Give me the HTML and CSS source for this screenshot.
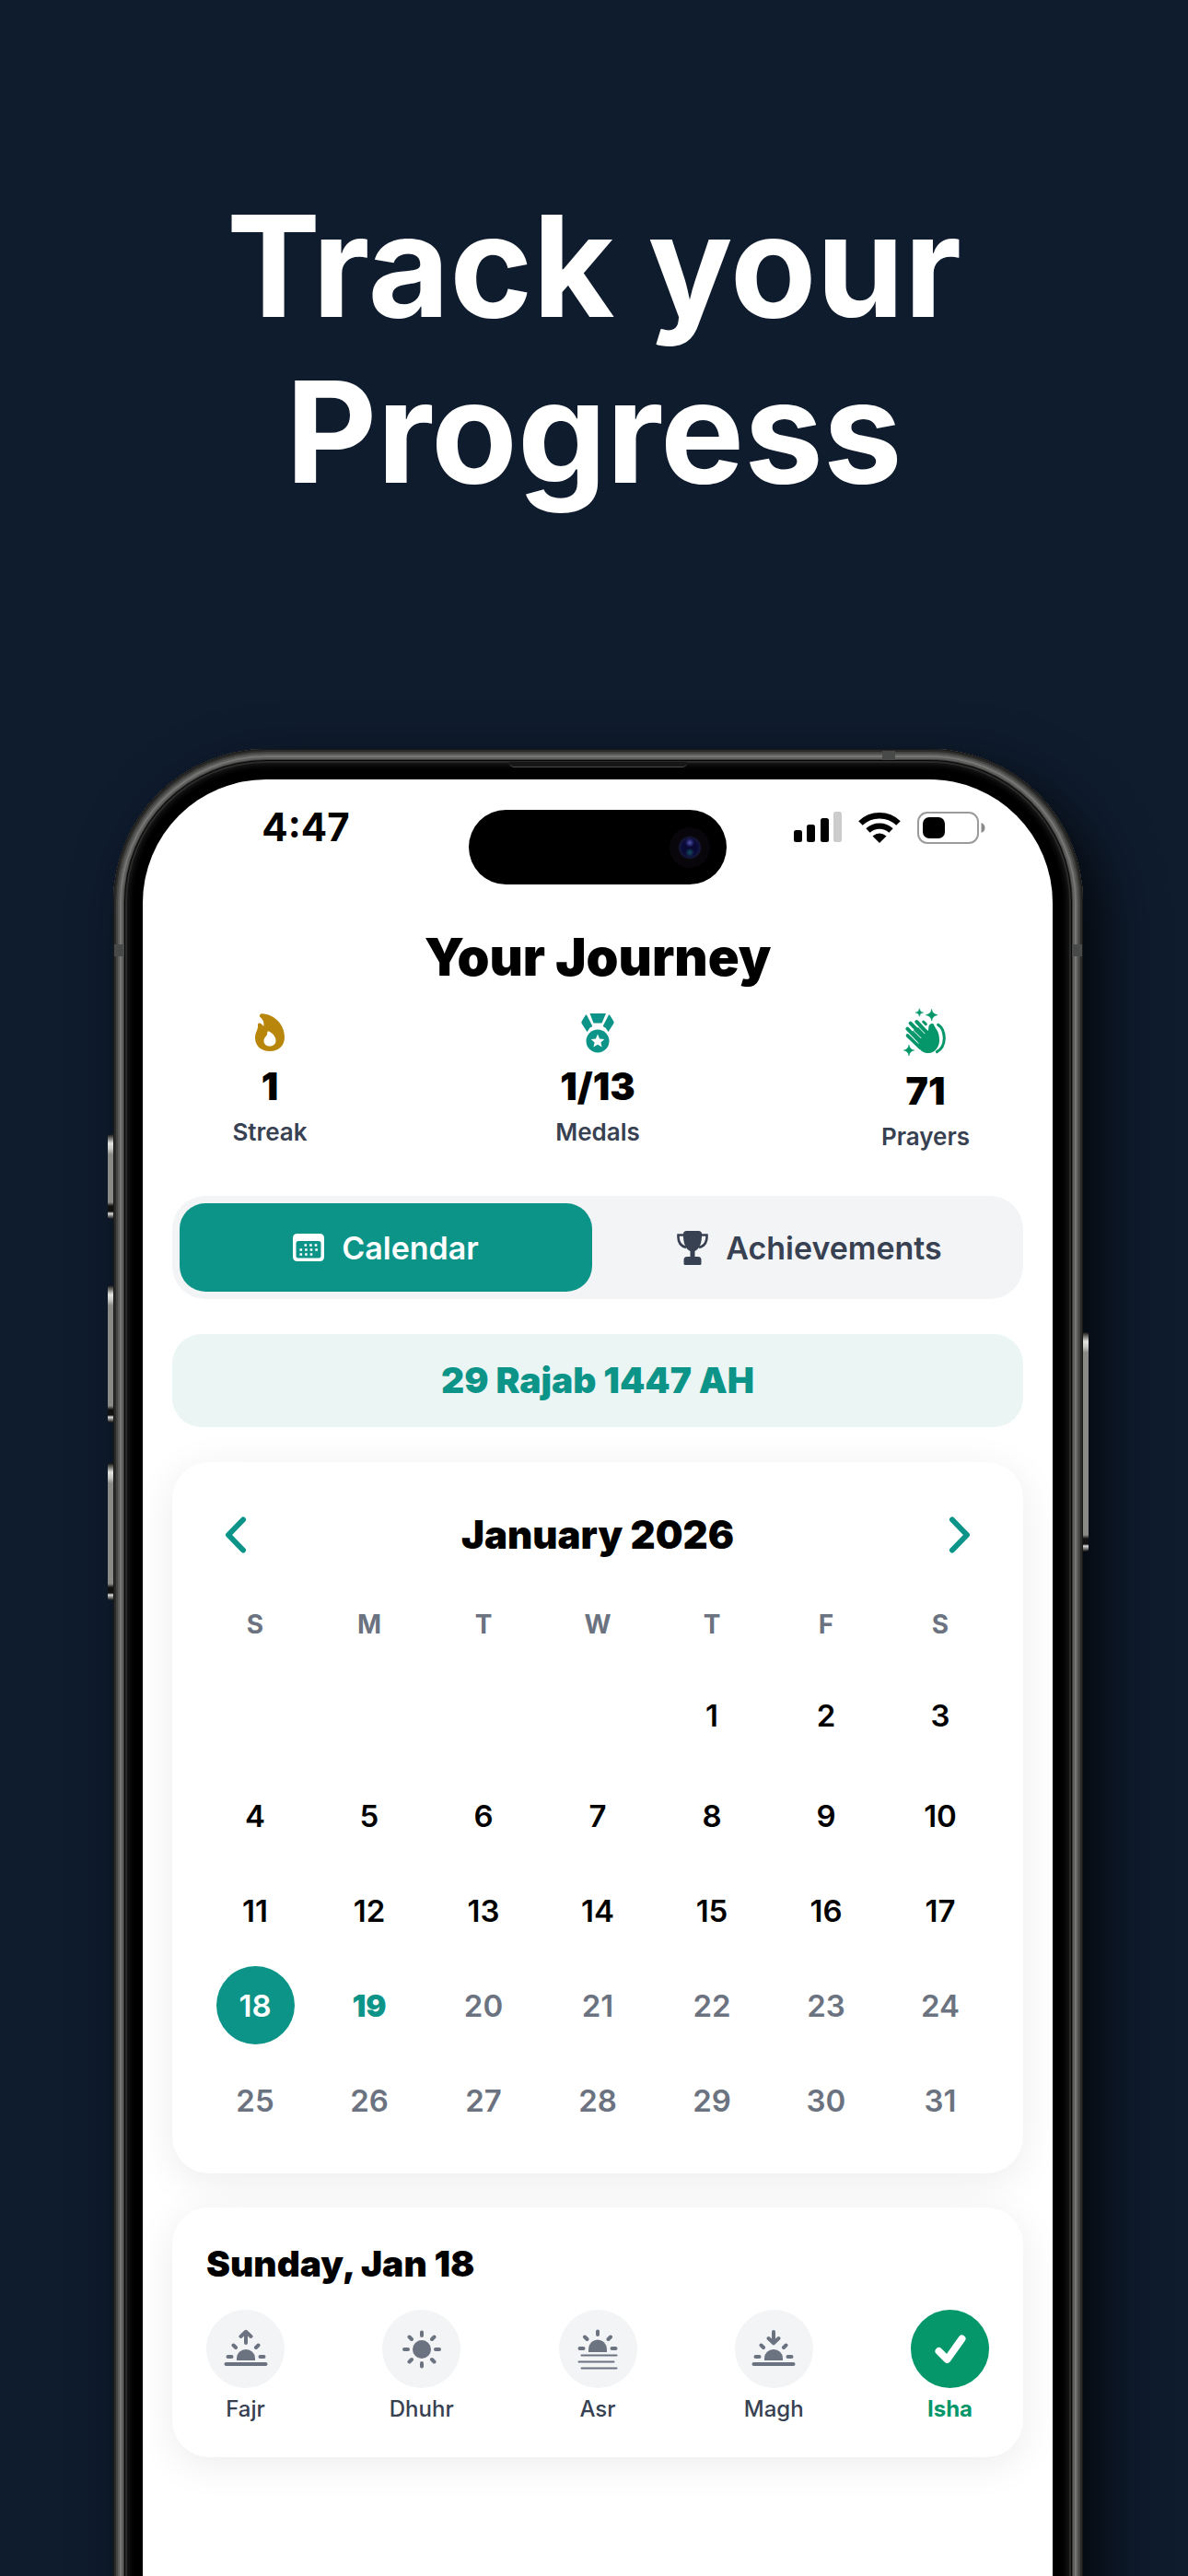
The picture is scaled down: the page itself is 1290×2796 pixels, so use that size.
FILE: index.html
```
<!DOCTYPE html>
<html lang="en">
<head>
    <meta charset="UTF-8">
    <meta name="viewport" content="width=device-width, initial-scale=1.0">
    <title>Track your Progress</title>
    <link rel="stylesheet" href="styles.css">
</head>
<body>
    <main class="stage">
        <h1>Track your<br>Progress</h1>

        <div class="phone">
            <span class="side-button action"></span>
            <span class="side-button volume-up"></span>
            <span class="side-button volume-down"></span>
            <span class="side-button power"></span>
            <span class="speaker"></span>
            <span class="antenna antenna-top"></span>
            <span class="antenna antenna-left"></span>
            <span class="antenna antenna-right"></span>

            <div class="screen">
                <div class="status-bar">
                    <span class="time">4:47</span>
                    <div class="island"><span class="camera"></span></div>
                    <div class="status-icons">
                        <svg width="52" height="34" viewBox="0 0 52 34">
                            <rect x="0" y="20" width="9" height="13" rx="2.5"/>
                            <rect x="14" y="14" width="9" height="19" rx="2.5"/>
                            <rect x="29" y="7" width="9" height="26" rx="2.5"/>
                            <rect x="43" y="0" width="9" height="33" rx="2.5" fill="#ccc"/>
                        </svg>
                        <svg width="46" height="34" viewBox="0 0 46 34">
                            <path d="M2.500 12.500A29.500 29.500 0 0 1 43.500 12.500" fill="none" stroke="#000" stroke-width="6.500"/>
                            <path d="M10.500 20.500A18.200 18.200 0 0 1 35.500 20.500" fill="none" stroke="#000" stroke-width="6.300"/>
                            <path d="M15.500 26.500Q23 20.500 30.500 26.500L23 34Z"/>
                        </svg>
                        <svg width="74" height="35" viewBox="0 0 74 35">
                            <rect x="1" y="1" width="65" height="33" rx="10" fill="none" stroke="#9b9b9b" stroke-width="2"/>
                            <rect x="6" y="6" width="24" height="23" rx="7"/>
                            <path d="M69.500 12Q73.500 13.500 73.500 17.500T69.500 23Z" fill="#8a8a8a"/>
                        </svg>
                    </div>
                </div>

                <div class="content">
                    <h2>Your Journey</h2>

                    <div class="stats">
                        <div class="stat">
                            <svg class="stat-icon" width="32" height="51" viewBox="0 -6 32 51" fill="#b8860b">
                                <path fill-rule="evenodd" d="M8 .3C20 1 32 11 32 26 32 35.500 25 41 16 41 7 41 0 35.500 0 26.500 0 20 3.500 18 3 12.500 2.800 10 5.500 10 7 11.500L9.300 14C10 9.500 8.500 6.500 5.500 4 4 2.500 5.500.2 8 .3ZM15 19.500C14 19 13 20 13.200 21.500 13.500 24.500 9.500 25.500 9.500 30 9.500 33.500 12.500 35.500 16 35.500 20 35.500 22.500 33 22.500 29.500 22.500 25 19 21.500 15 19.500Z"/>
                            </svg>
                            <strong>1</strong>
                            <span>Streak</span>
                        </div>
                        <div class="stat">
                            <svg class="stat-icon" width="36" height="51" viewBox="0 -6 36 51" fill="#0d9488">
                                <path d="M9.500 0H27L22.500 10.500H13.500ZM6 1.500 11.700 12.500Q13 14.500 9.500 15.500L6.500 20 .7 11Q0 9.500 .7 8.500L5 1.500ZM30 1.500 24.300 12.500Q23 14.500 26.500 15.500L29.500 20 35.300 11Q36 9.500 35.300 8.500L31 1.500Z"/>
                                <circle cx="18" cy="30" r="12.500"/>
                                <path d="M18 22.500 20.100 27.400 25.300 27.900 21.400 31.400 22.600 36.500 18 33.800 13.400 36.500 14.600 31.400 10.700 27.900 15.900 27.400Z" fill="#fff"/>
                            </svg>
                            <strong>1/13</strong>
                            <span>Medals</span>
                        </div>
                        <div class="stat">
                            <svg class="stat-icon" width="49" height="56" viewBox="33 27 147 168" fill="#059669">
                                <path d="M85 29Q86 41 98 42 86 43 85 55 84 43 72 42 84 41 85 29ZM125 31Q127 47 144 50 127 53 125 69 123 53 106 50 123 47 125 31ZM51 147Q53 162 68 165 53 168 51 183 49 168 34 165 49 162 51 147Z" stroke="#059669" stroke-width="1.500"/>
                                <g fill="none" stroke="#059669" stroke-linecap="round" stroke-width="12">
                                    <path d="M46 95 86 136M47 117 88 156M56 77 98 120M76 72 112 110"/>
                                    <path d="M98 72 106 80" stroke-width="9"/>
                                    <path d="M146 82Q165 94 166 126 165 158 142 170" stroke-width="9"/>
                                </g>
                                <path d="M62 102 86 87 112 102Q115 100 115 90C115 78 132 74 133 84 137 94 151 104 150 135 149 160 129 176 110 174 96 173 88 163 70 146L84 133Z"/>
                                <path d="M51 86 91 126M66 73 103 111" stroke="#fff" stroke-width="3" fill="none"/>
                                <path d="M46 107 82 143" stroke="#fff" stroke-width="3" fill="none"/>
                            </svg>
                            <strong>71</strong>
                            <span>Prayers</span>
                        </div>
                    </div>

                    <div class="tabs">
                        <button class="tab active" type="button">
                            <svg width="34" height="30" viewBox="0 0 34 30" fill="#fff">
                                <path fill-rule="evenodd" d="M5 0H29Q34 0 34 5V25Q34 30 29 30H5Q0 30 0 25V5Q0 0 5 0ZM6 8Q3.500 8 3.500 10.500V24Q3.500 26.500 6 26.500H28Q30.500 26.500 30.500 24V10.500Q30.500 8 28 8Z"/>
                                <path d="M12.500 12.500H27M7.500 17.500H27M7.500 22.500H22" fill="none" stroke="#fff" stroke-width="2.600" stroke-dasharray="2.600 3"/>
                            </svg>
                            Calendar
                        </button>
                        <button class="tab" type="button">
                            <svg width="34" height="37" viewBox="0 0 34 37" fill="#374151">
                                <path d="M10 0H24Q26.500 0 27 2.500C27.500 14 24 20 19.500 22V28H23Q26.500 28 26.500 31.500V35.500Q26.500 37 25 37H9Q7.500 37 7.500 35.500V31.500Q7.500 28 11 28H14.500V22C10 20 6.500 14 7 2.500Q7.500 0 10 0Z"/>
                                <path d="M7 4.500H1.500C1 12 4 16.500 10 18M27 4.500H32.500C33 12 30 16.500 24 18" fill="none" stroke="#374151" stroke-width="2.600"/>
                            </svg>
                            Achievements
                        </button>
                    </div>

                    <p class="hijri">29 Rajab 1447 AH</p>

                    <section class="card calendar">
                        <header class="month">
                            <button class="arrow" type="button" aria-label="Previous month">
                                <svg width="26" height="40" viewBox="0 0 26 40"><path d="M21 3.500 5 20 21 36.500"/></svg>
                            </button>
                            <h3>January 2026</h3>
                            <button class="arrow" type="button" aria-label="Next month">
                                <svg width="26" height="40" viewBox="0 0 26 40"><path d="M5 3.500 21 20 5 36.500"/></svg>
                            </button>
                        </header>
                        <table>
                            <thead>
                                <tr><th>S</th><th>M</th><th>T</th><th>W</th><th>T</th><th>F</th><th>S</th></tr>
                            </thead>
                            <tbody id="days"></tbody>
                        </table>
                    </section>

                    <section class="card day">
                        <h3>Sunday, Jan 18</h3>
                        <div class="prayers">
                            <button class="prayer" type="button">
                                <span class="circle">
                                    <svg width="48" height="48" viewBox="0 0 48 48">
                                        <path class="fill" d="M14 36V33.500a10 9.500 0 0 1 20 0V36Z"/>
                                        <path class="line" d="M2.500 40H45.500" />
                                        <path class="line" d="M4.500 32H8.500M39.500 32H43.500M10.500 19.500 13 22M37.500 19.500 35 22M24 17V5M18.500 10 24 4.800 29.500 10"/>
                                    </svg>
                                </span>
                                Fajr
                            </button>
                            <button class="prayer" type="button">
                                <span class="circle">
                                    <svg width="48" height="48" viewBox="0 0 48 48">
                                        <circle class="fill" cx="24" cy="24" r="10"/>
                                        <path class="line" d="M24 5.500V9M24 39V42.500M5 24H9M39 24H43M10.500 10.500 13 13M37.500 10.500 35 13M10.500 37.500 13 35M37.500 37.500 35 35"/>
                                    </svg>
                                </span>
                                Dhuhr
                            </button>
                            <button class="prayer" type="button">
                                <span class="circle">
                                    <svg width="48" height="48" viewBox="0 0 48 48">
                                        <path class="fill" d="M14 27V24a10 10.500 0 0 1 20 0V27Z"/>
                                        <path class="line" d="M24 4.500V8M4.500 23H8.500M39.500 23H43.500M10 10.500 12.500 13M38 10.500 35.500 13"/>
                                        <path class="line thin" d="M6.500 30.500H44.500M3.500 37.500H41.500M6.500 44.500H44.500"/>
                                    </svg>
                                </span>
                                Asr
                            </button>
                            <button class="prayer" type="button">
                                <span class="circle">
                                    <svg width="48" height="48" viewBox="0 0 48 48">
                                        <path class="fill" d="M14 36V33.500a10 9.500 0 0 1 20 0V36Z"/>
                                        <path class="line" d="M2.500 40H45.500" />
                                        <path class="line" d="M4.500 32H8.500M39.500 32H43.500M10.500 19.500 13 22M37.500 19.500 35 22M24 16V5M18.500 12 24 17.200 29.500 12"/>
                                    </svg>
                                </span>
                                Magh
                            </button>
                            <button class="prayer done" type="button">
                                <span class="circle">
                                    <svg width="48" height="48" viewBox="0 0 48 48">
                                        <path class="check" d="M11.500 26 20.500 35 36.500 12.500"/>
                                    </svg>
                                </span>
                                Isha
                            </button>
                        </div>
                    </section>
                </div>
            </div>
        </div>
    </main>
    <script>
        const days = document.getElementById('days');
        const START_DAY = 4; // January 2026 starts on a Thursday
        const TOTAL_DAYS = 31;
        const SELECTED = 18;
        const TODAY = 19;

        for (let first = 1 - START_DAY; first <= TOTAL_DAYS; first += 7) {
            const row = days.insertRow();
            for (let day = first; day < first + 7; day++) {
                const cell = row.insertCell();
                if (day < 1 || day > TOTAL_DAYS) continue;
                const button = document.createElement('button');
                button.type = 'button';
                button.className = 'date';
                button.textContent = day;
                if (day === SELECTED) button.classList.add('selected');
                if (day === TODAY) button.classList.add('today');
                if (day > TODAY) button.classList.add('future');
                cell.appendChild(button);
            }
        }
    </script>
</body>
</html>
```
FILE: styles.css
```
* {
    box-sizing: border-box;
}

body {
    margin: 0;
    background-color: #0f1c2e;
    color: #000;
    font-family: 'Inter', 'Liberation Sans', sans-serif;
}

h1, h2, h3, p {
    margin: 0;
}

button {
    padding: 0;
    border: none;
    background: none;
    color: inherit;
    font: inherit;
    cursor: pointer;
}

svg {
    display: block;
    flex: none;
}

.stage {
    display: flex;
    flex-direction: column;
    min-height: 100vh;
    padding-top: 199px;
    overflow: hidden;
}

h1 {
    margin-bottom: 254px;
    color: #fff;
    font-size: 153px;
    font-weight: 700;
    line-height: 180px;
    text-align: center;
}

/* phone frame */

.phone {
    position: relative;
    display: flex;
    flex: 1;
    flex-direction: column;
    margin: 0 114px -60px 123px;
    padding: 33px 33px 0 32px;
    border-radius: 166px 166px 0 0;
    background-color: #000;
    box-shadow:
        inset 0 0 0 1px #191919,
        inset 0 0 0 3px #2b2b2a,
        inset 0 0 0 5px #454544,
        inset 0 0 0 7px #5c5c5a,
        inset 0 0 0 9px #767674,
        inset 0 0 0 11px #5f5f5d,
        inset 0 0 0 12px #3c3c3b,
        inset 0 0 0 13px #060606,
        inset 0 0 0 15px #2a2a2a,
        inset 0 0 6px 17px #1c1c1c,
        22px 24px 64px rgba(0, 0, 0, 0.75);
}

.side-button {
    position: absolute;
    left: -6px;
    width: 6px;
    border-radius: 3px 0 0 3px;
    background: linear-gradient(#111, #e4e4e0 10px, #c8c8c4 16px, #8a8a87 22px, #8a8a87 calc(100% - 18px), #111 calc(100% - 14px), #111 calc(100% - 8px), #ddd calc(100% - 6px), #111);
}

.action {
    top: 418px;
    height: 92px;
}

.volume-up {
    top: 582px;
    height: 149px;
}

.volume-down {
    top: 775px;
    height: 149px;
}

.power {
    top: 633px;
    right: -6px;
    left: auto;
    height: 238px;
    border-radius: 0 3px 3px 0;
}

.speaker {
    position: absolute;
    top: 14px;
    left: 430px;
    width: 193px;
    height: 6px;
    border-bottom: 1px solid #4a4a4a;
    border-radius: 0 0 5px 5px;
    background-color: #161616;
}

.antenna {
    position: absolute;
    background-color: #484a4a;
}

.antenna-top {
    top: 2px;
    right: 204px;
    width: 14px;
    height: 10px;
}

.antenna-left,
.antenna-right {
    top: 212px;
    width: 11px;
    height: 13px;
}

.antenna-left {
    left: 1px;
}

.antenna-right {
    right: 1px;
}

.screen {
    flex: 1;
    border-radius: 134px 134px 0 0;
    background-color: #fff;
}

.status-bar {
    display: grid;
    grid-template-columns: 1fr 280px 1fr;
    align-items: start;
    padding-top: 33px;
}

.time {
    font-size: 42px;
    font-weight: 700;
    line-height: 38px;
    text-align: center;
}

.island {
    display: flex;
    align-items: center;
    justify-content: flex-end;
    height: 81px;
    padding-right: 18px;
    border-radius: 41px;
    background-color: #000;
}

.camera {
    width: 44px;
    height: 44px;
    border-radius: 50%;
    background: radial-gradient(circle at 50% 38%, #5558a0 0, #22246a 3px, transparent 5px),
        radial-gradient(circle at 50% 62%, #145060 0, transparent 5px),
        radial-gradient(circle, #07072e 0, #0a0a38 8px, #15173a 11px, #09060b 13px);
}

.status-icons {
    display: flex;
    align-items: center;
    justify-content: center;
    gap: 18px;
    height: 38px;
}

/* journey */

.content {
    display: flex;
    flex-direction: column;
    padding: 47px 32px 0;
}

h2 {
    font-size: 56px;
    font-weight: 900;
    line-height: 64px;
    text-align: center;
}

.stats {
    display: flex;
    justify-content: space-between;
    padding: 23px 48px 0;
}

.stat {
    display: flex;
    flex-direction: column;
    align-items: center;
    gap: 10px;
    width: 116px;
}

.stat strong {
    font-size: 41px;
    font-weight: 900;
    line-height: 48px;
}

.stat span {
    color: #374151;
    font-size: 26px;
    font-weight: 600;
    line-height: 32px;
}

.tabs {
    display: flex;
    gap: 12px;
    margin-top: 48px;
    padding: 8px;
    border-radius: 36px;
    background-color: #f3f4f6;
}

.tab {
    display: flex;
    flex: 1;
    align-items: center;
    justify-content: center;
    gap: 19px;
    height: 96px;
    border-radius: 28px;
    color: #374151;
    font-size: 34px;
    font-weight: 600;
}

.tab.active {
    background-color: #0d9488;
    color: #fff;
}

.hijri {
    margin-top: 38px;
    padding: 26px 0 27px;
    border-radius: 32px;
    background-color: #ebf5f4;
    color: #0d9488;
    font-size: 39px;
    font-weight: 900;
    line-height: 48px;
    text-align: center;
}

.card {
    border-radius: 40px;
    background-color: #fff;
    box-shadow: 0 8px 44px rgba(0, 0, 0, 0.08);
}

.calendar {
    margin-top: 38px;
    padding: 37px 28px 28px;
}

.month {
    display: flex;
    align-items: center;
    justify-content: space-between;
    height: 84px;
    padding: 0 28px;
}

.arrow path {
    fill: none;
    stroke: #0d9488;
    stroke-width: 6px;
    stroke-linecap: round;
    stroke-linejoin: round;
}

h3 {
    font-size: 39px;
    font-weight: 900;
    line-height: 48px;
}

.month h3 {
    font-size: 42px;
}

table {
    width: 100%;
    margin-top: 12px;
    border-collapse: collapse;
    table-layout: fixed;
}

th, td {
    padding: 0;
    text-align: center;
}

th {
    height: 85px;
    color: #6b7280;
    font-size: 28px;
    font-weight: 700;
}

td {
    height: 103px;
}

tbody tr:first-child td {
    height: 114px;
}

.date {
    display: block;
    width: 85px;
    height: 85px;
    margin: 0 auto;
    border-radius: 50%;
    font-size: 33px;
    font-weight: 600;
}

.date.selected {
    background-color: #0d9488;
    color: #fff;
}

.date.today {
    color: #0d9488;
    font-weight: 900;
}

.date.future {
    color: #6b7280;
}

.day {
    margin-top: 37px;
    padding: 37px;
}

.prayers {
    display: flex;
    justify-content: space-between;
    margin-top: 26px;
}

.prayer {
    display: flex;
    flex-direction: column;
    align-items: center;
    gap: 8px;
    width: 85px;
    color: #374151;
    font-size: 24px;
    font-weight: 500;
    line-height: 30px;
}

.circle {
    display: flex;
    align-items: center;
    justify-content: center;
    width: 85px;
    height: 85px;
    border-radius: 50%;
    background-color: #f3f4f6;
}

.fill {
    fill: #6b7280;
}

.line {
    fill: none;
    stroke: #6b7280;
    stroke-width: 4px;
    stroke-linecap: round;
    stroke-linejoin: round;
}

.line.thin {
    stroke-width: 2px;
}

.check {
    fill: none;
    stroke: #fff;
    stroke-width: 8px;
    stroke-linecap: round;
    stroke-linejoin: round;
}

.done {
    color: #059669;
    font-weight: 700;
}

.done .circle {
    background-color: #059669;
}
```
